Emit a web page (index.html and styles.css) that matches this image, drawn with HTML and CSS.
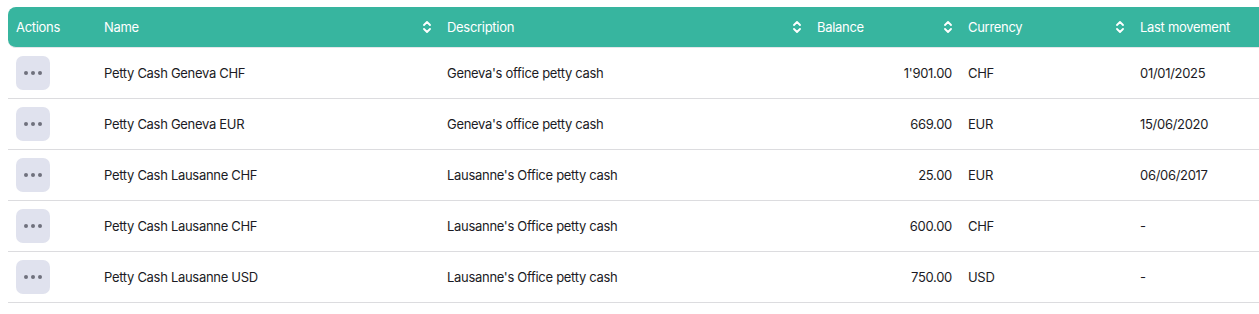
FILE: index.html
```html
<!DOCTYPE html>
<html>
<head>
<meta charset="utf-8">
<link rel="stylesheet" href="styles.css">
</head>
<body>
<div class="wrap">
<table class="grid">
  <colgroup>
    <col class="c-act"><col class="c-name"><col class="c-desc"><col class="c-bal"><col class="c-cur"><col class="c-last">
  </colgroup>
  <thead>
    <tr>
      <th><span class="hd">Actions</span></th>
      <th><div class="hd-cell"><span>Name</span><svg class="sort" viewBox="0 0 8 14"><path d="M1 5 L4 2 L7 5 M1 9 L4 12 L7 9"/></svg></div></th>
      <th><div class="hd-cell"><span>Description</span><svg class="sort" viewBox="0 0 8 14"><path d="M1 5 L4 2 L7 5 M1 9 L4 12 L7 9"/></svg></div></th>
      <th><div class="hd-cell"><span>Balance</span><svg class="sort" viewBox="0 0 8 14"><path d="M1 5 L4 2 L7 5 M1 9 L4 12 L7 9"/></svg></div></th>
      <th><div class="hd-cell"><span>Currency</span><svg class="sort" viewBox="0 0 8 14"><path d="M1 5 L4 2 L7 5 M1 9 L4 12 L7 9"/></svg></div></th>
      <th><div class="hd-cell"><span>Last movement</span></div></th>
    </tr>
  </thead>
  <tbody>
    <tr>
      <td><button class="more"><span></span><span></span><span></span></button></td>
      <td>Petty Cash Geneva CHF</td>
      <td>Geneva's office petty cash</td>
      <td class="num">1'901.00</td>
      <td>CHF</td>
      <td>01/01/2025</td>
    </tr>
    <tr>
      <td><button class="more"><span></span><span></span><span></span></button></td>
      <td>Petty Cash Geneva EUR</td>
      <td>Geneva's office petty cash</td>
      <td class="num">669.00</td>
      <td>EUR</td>
      <td>15/06/2020</td>
    </tr>
    <tr>
      <td><button class="more"><span></span><span></span><span></span></button></td>
      <td>Petty Cash Lausanne CHF</td>
      <td>Lausanne's Office petty cash</td>
      <td class="num">25.00</td>
      <td>EUR</td>
      <td>06/06/2017</td>
    </tr>
    <tr>
      <td><button class="more"><span></span><span></span><span></span></button></td>
      <td>Petty Cash Lausanne CHF</td>
      <td>Lausanne's Office petty cash</td>
      <td class="num">600.00</td>
      <td>CHF</td>
      <td>-</td>
    </tr>
    <tr>
      <td><button class="more"><span></span><span></span><span></span></button></td>
      <td>Petty Cash Lausanne USD</td>
      <td>Lausanne's Office petty cash</td>
      <td class="num">750.00</td>
      <td>USD</td>
      <td>-</td>
    </tr>
  </tbody>
</table>
</div>
</body>
</html>
```

FILE: styles.css
```css
html, body {
  margin: 0;
  padding: 0;
  overflow: hidden;
  background: #ffffff;
}
body {
  font-family: Inter, "Liberation Sans", sans-serif;
  font-size: 13px;
  color: #1b1b24;
}
.wrap {
  padding: 7px 0 0 8px;
}
.grid {
  border-collapse: separate;
  border-spacing: 0;
  table-layout: fixed;
  width: 1300px;
}
.c-act { width: 88px; }
.c-name { width: 343px; }
.c-desc { width: 370px; }
.c-bal { width: 151px; }
.c-cur { width: 172px; }
.c-last { width: 176px; }

thead th {
  background: #37b59f;
  color: #ffffff;
  font-weight: 400;
  text-align: left;
  height: 40px;
  padding: 0 8px;
  border-bottom: 1px solid #e4e6ea;
  letter-spacing: -0.3px;
}
thead th:first-child {
  border-radius: 8px 0 0 8px;
}
.hd-cell {
  display: flex;
  align-items: center;
  justify-content: space-between;
}
.sort {
  width: 8px;
  height: 14px;
  fill: none;
  stroke: #ffffff;
  stroke-width: 1.8;
  stroke-linecap: round;
  stroke-linejoin: round;
}
tbody td {
  height: 50px;
  padding: 0 8px;
  border-bottom: 1px solid #dcdcdf;
  vertical-align: middle;
  white-space: nowrap;
  letter-spacing: -0.3px;
}
td.num {
  text-align: right;
}
.more {
  width: 34px;
  height: 34px;
  border: none;
  border-radius: 7px;
  background: #e0e2ee;
  display: flex;
  align-items: center;
  justify-content: center;
  gap: 3px;
  padding: 0;
}
.more span {
  width: 4px;
  height: 4px;
  border-radius: 50%;
  background: #6f717d;
}
```
